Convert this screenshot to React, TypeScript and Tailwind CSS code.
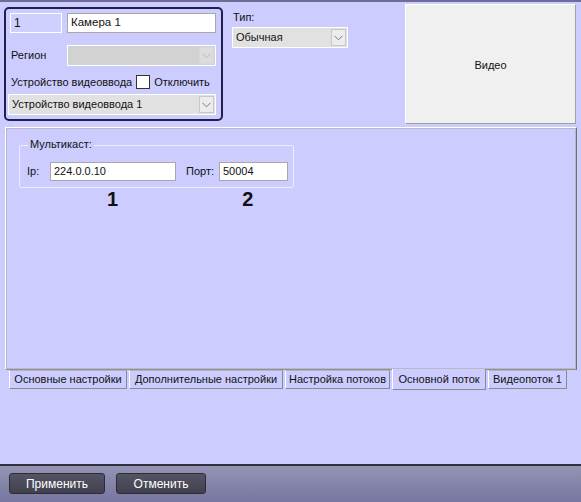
import React from "react";

const Chevron = ({ color = "#7a7a7a" }: { color?: string }) => (
  <svg width="9" height="6" viewBox="0 0 9 6">
    <path d="M0.5 0.8 L4.5 4.8 L8.5 0.8" fill="none" stroke={color} strokeWidth="1" />
  </svg>
);

const Select = ({
  text,
  className,
  disabled,
}: {
  text: string;
  className: string;
  disabled?: boolean;
}) => (
  <div
    className={`flex items-stretch border border-white ${
      disabled ? "bg-[#d2d2d2]" : "bg-[#e1e1e1]"
    } ${className}`}
  >
    <div className="flex-1 flex items-center pl-[3px] text-[#111] leading-none">{text}</div>
    <div
      className={`w-[15px] m-[1px] flex items-center justify-center border ${
        disabled ? "bg-[#dcdcdc] border-[#d8d8d8]" : "bg-[#ececec] border-[#c8c8c8]"
      }`}
    >
      <Chevron color={disabled ? "#b8b8b8" : "#7a7a7a"} />
    </div>
  </div>
);

const Tab = ({ label, w, active }: { label: string; w: string; active?: boolean }) => (
  <div
    className={`${w} flex items-center justify-center leading-none ${
      active
        ? "h-[21px] -mt-[1px] border-l border-l-white border-r border-r-[#8a8a8a] border-b border-b-[#8a8a8a] bg-[#ccccfe]"
        : "h-[19px] border-l border-l-white border-r border-r-[#8a8a8a] border-b border-b-[#8a8a8a] border-t border-t-[#b0b0c8]"
    } text-[#111]`}
  >
    {label}
  </div>
);

export default function App() {
  return (
    <div
      className="w-[581px] h-[502px] bg-[#ccccfe] flex flex-col text-[11px] text-[#111] overflow-hidden"
      style={{ fontFamily: '"Liberation Sans", Arial, sans-serif' }}
    >
      <div className="h-[2px] bg-[#6d6d96] shrink-0" />
      {/* top row */}
      <div className="flex h-[122px] shrink-0 pl-[4px] pr-[5px]">
        <div className="mt-[5px] w-[219px] h-[114px] border-2 border-[#20204e] rounded-[5px] flex flex-col pl-[2px]">
          <div className="flex mt-[4px] h-[20px]">
            <div className="ml-[2px] w-[52px] border border-white bg-[#d0d0ff] flex items-center pl-[3px] leading-none text-[12px]">
              1
            </div>
            <div className="ml-[5px] w-[149px] border border-[#a8a8a8] bg-white flex items-center pl-[3px] leading-none text-[11.5px]">
              Камера 1
            </div>
          </div>
          <div className="flex mt-[12px] h-[21px] items-center">
            <div className="w-[59px] pl-[3px] leading-none">Регион</div>
            <Select text="" className="w-[149px] h-[21px]" disabled />
          </div>
          <div className="flex mt-[9px] h-[14px] items-center">
            <div className="pl-[3px] leading-none">Устройство видеоввода</div>
            <div className="ml-[4px] w-[14px] h-[14px] bg-white border border-[#333] shrink-0" />
            <div className="ml-[4px] leading-none">Отключить</div>
          </div>
          <Select text="Устройство видеоввода 1" className="mt-[5px] w-[208px] h-[21px]" />
        </div>
        <div className="ml-[9px] mt-[10px] flex flex-col">
          <div className="pl-[1px] leading-none h-[12px]">Тип:</div>
          <Select text="Обычная" className="mt-[3px] w-[116px] h-[21px]" />
        </div>
        <div className="ml-auto mt-[2px] w-[171px] h-[120px] bg-[#f0f0f0] border border-t-white border-l-white border-r-[#a0a0a0] border-b-[#a0a0a0] flex items-center justify-center pt-[3px]">
          Видео
        </div>
      </div>
      {/* tab panel */}
      <div className="ml-[5px] mt-[3px] w-[572px] flex flex-col shrink-0">
        <div className="h-[243px] border-l border-l-white border-t border-t-white border-r border-r-[#707070] border-b border-b-[#909090] outline outline-1 outline-[#b8b8c8] -outline-offset-2 px-[13px] pt-[16px]">
          <div className="relative w-[275px] h-[43px] border border-[#eeeef8] rounded-[2px] mt-[1px]">
            <div className="absolute left-[8px] -top-[7px] bg-[#ccccfe] px-[2px] leading-none">
              Мультикаст:
            </div>
            <div className="flex items-center mt-[16px] pl-[7px]">
              <div className="w-[23px] leading-none">Ip:</div>
              <div className="w-[126px] h-[19px] bg-white border border-[#a8a8a8] flex items-center pl-[3px] leading-none">
                224.0.0.10
              </div>
              <div className="ml-[10px] w-[33px] leading-none">Порт:</div>
              <div className="w-[69px] h-[19px] bg-white border border-[#a8a8a8] flex items-center pl-[3px] leading-none">
                50004
              </div>
            </div>
          </div>
          <div className="flex mt-[1px] text-[20px] font-bold leading-none">
            <div className="ml-[88px]">1</div>
            <div className="ml-[124px]">2</div>
          </div>
        </div>
        <div className="flex pl-[4px] gap-[2px] h-[20px]">
          <Tab label="Основные настройки" w="w-[118px]" />
          <Tab label="Дополнительные настройки" w="w-[154px]" />
          <Tab label="Настройка потоков" w="w-[105px]" />
          <Tab label="Основной поток" w="w-[94px]" active />
          <Tab label="Видеопоток 1" w="w-[79px]" />
        </div>
      </div>
      <div className="flex-1" />
      <div className="h-[2px] bg-[#30303e] shrink-0" />
      <div className="h-[36px] shrink-0 bg-gradient-to-b from-[#9494b4] to-[#7676a0] flex items-start pt-[7px] pl-[9px] gap-[11px]">
        <div className="w-[96px] h-[21px] rounded-[3px] bg-gradient-to-b from-[#545464] to-[#40404e] border border-[#2c2c38] text-white flex items-center justify-center leading-none text-[12px]">
          Применить
        </div>
        <div className="w-[90px] h-[21px] rounded-[3px] bg-gradient-to-b from-[#545464] to-[#40404e] border border-[#2c2c38] text-white flex items-center justify-center leading-none text-[12px]">
          Отменить
        </div>
      </div>
    </div>
  );
}
